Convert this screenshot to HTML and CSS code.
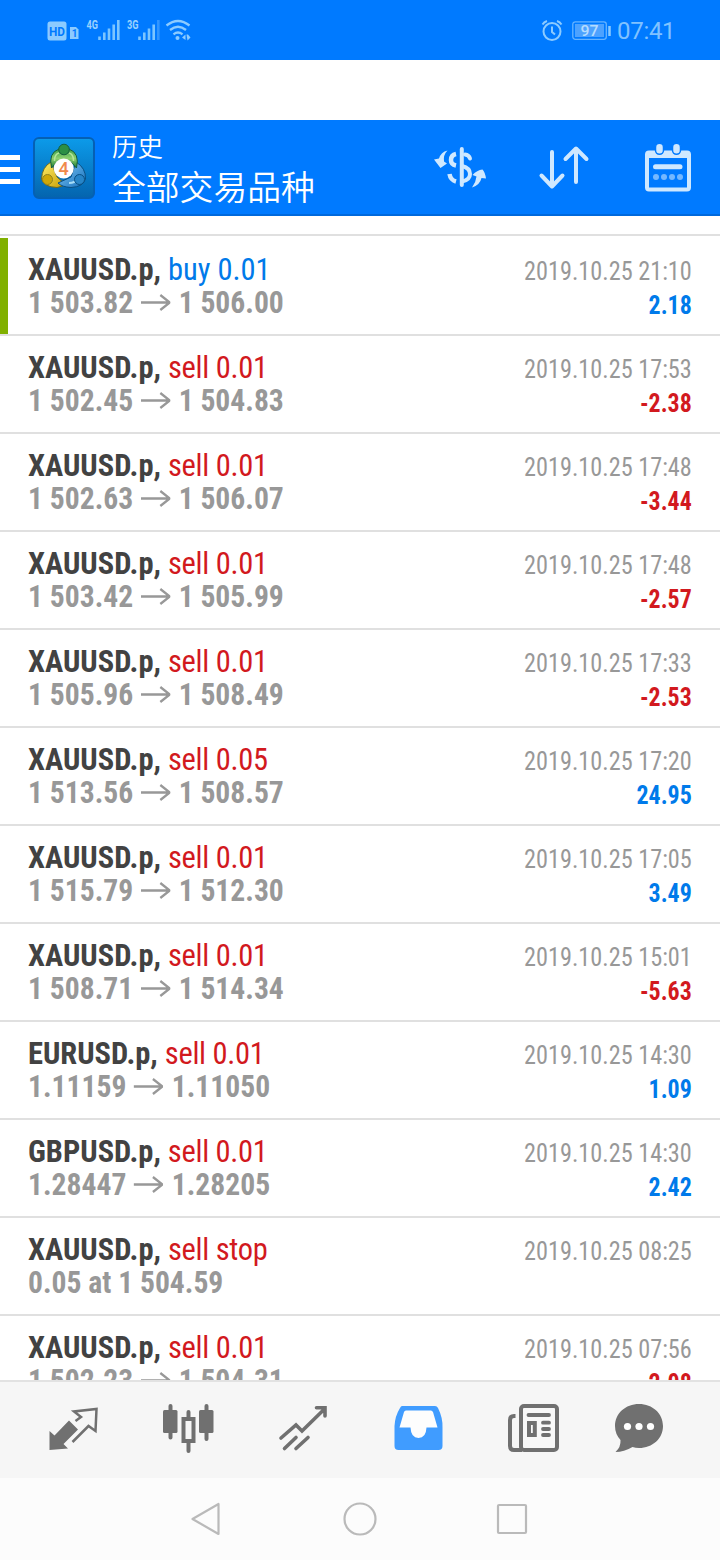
FILE: index.html
```html
<!DOCTYPE html>
<html lang="zh-CN">
<head>
<meta charset="utf-8">
<title>历史</title>
<link rel="stylesheet" href="styles.css">
</head>
<body>
<svg class="defs" width="0" height="0" aria-hidden="true">
  <symbol id="arrow" viewBox="0 0 30 20" preserveAspectRatio="none"><path d="M0 9.200H28M19.500 1.700L29 9.200L19.500 16.700" fill="none" stroke="#989898" stroke-width="2.300"/></symbol>
</svg>
<div class="screen">
  <div class="status">
    <svg class="status-left" width="150" height="30" viewBox="45 15 150 30">
      <rect x="47.500" y="21.500" width="19" height="19" rx="2.500" fill="#8ccbff"/>
      <text x="49" y="35.500" class="hd" textLength="16" lengthAdjust="spacingAndGlyphs">HD</text>
      <path d="M70 27H76L78.500 29.500V39H70Z" fill="#8ccbff"/>
      <text x="71.800" y="37" class="sim">1</text>
      <text x="86.500" y="28.800" class="net" textLength="11.500" lengthAdjust="spacingAndGlyphs">4G</text>
      <path d="M99.500 40V36.500M104.300 40V32.500M109 40V28.500M113.700 40V24.500M118.300 40V20" stroke="#7cc5ff" stroke-width="2.600"/>
      <text x="127" y="28.800" class="net" textLength="11.500" lengthAdjust="spacingAndGlyphs">3G</text>
      <path d="M139.500 40V36.500M144.300 40V32.500M149 40V28.500M153.700 40V24.500" stroke="#7cc5ff" stroke-width="2.600"/>
      <path d="M158.300 40V20" stroke="#3195ff" stroke-width="2.600"/>
      <path d="M166.500 25.500Q178 16.500 189.500 25.500M170 30Q178 23.500 186 30M173.500 34.300Q178 30.800 182.500 34.300" fill="none" stroke="#8ccbff" stroke-width="2.300"/>
      <circle cx="177.500" cy="38" r="2" fill="#8ccbff"/>
      <path d="M182 37.500L185.500 34.500V40ZM186.500 34.500H188L190.500 37.500L187.500 40.500Z" fill="#8ccbff"/>
    </svg>
    <div class="status-right">
      <svg width="22" height="24" viewBox="0 0 22 24"><g fill="none" stroke="#8ccbff" stroke-width="2"><circle cx="11" cy="12.500" r="8.500"/><path d="M11 7.500V13L14 15.500M1.500 5.500Q3 3 6 2M20.500 5.500Q19 3 16 2"/></g></svg>
      <svg width="40" height="20" viewBox="0 0 40 20"><rect x=".8" y=".8" width="33.500" height="17.500" rx="2.500" fill="none" stroke="#66b3ff" stroke-width="1.300"/><rect x="3" y="3" width="29" height="13" fill="#4da2ff"/><path d="M37.500 5V15" stroke="#8ccbff" stroke-width="2.500"/><text x="8.500" y="15" class="pct" textLength="18" lengthAdjust="spacingAndGlyphs">97</text></svg>
      <span class="clock">07:41</span>
    </div>
  </div>

  <div class="header">
    <div class="menu"><i></i><i></i><i></i></div>
    <svg class="logo" width="62" height="62" viewBox="0 0 62 62">
      <defs>
        <linearGradient id="bg" x2="0" y2="1"><stop offset="0" stop-color="#0c9bea"/><stop offset="1" stop-color="#0464ae"/></linearGradient>
        <linearGradient id="gr" x2="0" y2="1"><stop offset="0" stop-color="#3aa04c"/><stop offset=".5" stop-color="#8fd070"/><stop offset="1" stop-color="#187b30"/></linearGradient>
        <linearGradient id="ye" x2="1" y2="1"><stop offset="0" stop-color="#fff06a"/><stop offset="1" stop-color="#c89a00"/></linearGradient>
        <linearGradient id="bl" x2="1" y2="1"><stop offset="0" stop-color="#85cdf7"/><stop offset="1" stop-color="#146ebc"/></linearGradient>
      </defs>
      <rect x="1" y="1" width="60" height="60" rx="5" fill="url(#bg)" stroke="#0560b4" stroke-width="2"/>
      <path d="M18 25Q9 30 8.500 42Q11 50 24 50.500L33 48L24 40Z" fill="url(#ye)" stroke="#6f6a20"/>
      <path d="M43 25Q53 31 52.500 42Q50 50 38 50.500Q29 50 25 46L38 40Z" fill="url(#bl)" stroke="#095084"/>
      <path d="M36 46Q42 46 44 42" fill="none" stroke="#a5dcf7" stroke-width="2"/>
      <path d="M18.500 31Q15 16 26 12H36Q47 16 43.500 31L38 25H24Z" fill="url(#gr)" stroke="#155d3b"/>
      <path d="M21.500 24Q21.500 17 26 16M40.500 24Q40.500 17 36 16" fill="none" stroke="#b5e59a" stroke-width="1.500"/>
      <circle cx="31" cy="12.500" r="5.300" fill="#2c8f45" stroke="#155d3b"/>
      <circle cx="14.500" cy="42.500" r="5" fill="#cfa808" stroke="#91821e"/>
      <circle cx="46.500" cy="42.500" r="5" fill="#2785c8" stroke="#095084"/>
      <circle cx="30.700" cy="31.500" r="10" fill="#fff"/>
      <text x="30.700" y="38" class="four">4</text>
    </svg>
    <div class="titles"><div class="title">历史</div><div class="subtitle">全部交易品种</div></div>
    <svg class="tools" width="270" height="60" viewBox="430 136 270 60">
      <g fill="none" stroke="#cfe8ff" stroke-width="4" stroke-linecap="round">
        <path d="M461.800 149V185"/>
        <path d="M465 154.500Q469 155 470 158.500M462 166Q470 168 470 174Q470 180 462 181.500"/>
      </g>
      <path d="M456 154Q451 155 451 160Q451 164.500 456 165.500M449.500 174Q450.500 180 456 181.500" fill="none" stroke="#cfe8ff" stroke-width="4.500"/>
      <path d="M447.500 150.500Q441 152 439 158.500L434 159.500L440.500 168L447 163.500L444 161.500Q443 155 447.500 150.500ZM472 187.500Q476 182 476.500 176.500L472.500 175Q477 170 482.500 169.500Q485 172 486 178.500L481.500 178Q480 185 472 187.500Z" fill="#cfe8ff"/>
      <g fill="none" stroke="#cfe8ff" stroke-width="4" stroke-linecap="round" stroke-linejoin="round">
        <path d="M552 152V186M541.500 175.500L552 186.500L562.500 175.500M576 182V149M565.500 159L576 148.500L586.500 159"/>
      </g>
      <rect x="647" y="152.500" width="42" height="37" rx="2" fill="none" stroke="#cfe8ff" stroke-width="4"/>
      <path d="M647 151H689V158H647Z" fill="#cfe8ff"/>
      <g fill="#cfe8ff" stroke="#007aff" stroke-width="1.500"><rect x="655.500" y="143.300" width="8" height="11" rx="4"/><rect x="672.500" y="143.300" width="8" height="11" rx="4"/></g>
      <path d="M655.500 166.700H680" stroke="#cfe8ff" stroke-width="5" stroke-linecap="round"/>
      <g fill="#75b8ff"><circle cx="656" cy="177" r="3"/><circle cx="664" cy="177" r="3"/><circle cx="672" cy="177" r="3"/><circle cx="680" cy="177" r="3"/></g>
    </svg>
  </div>

  <div class="list">
    <div class="row marked"><div class="deal"><div class="order"><b>XAUUSD.p,</b> <span class="buy">buy 0.01</span></div><div class="price">1 503.82 <svg class="arr"><use href="#arrow"/></svg> 1 506.00</div></div><div class="meta"><div class="time">2019.10.25 21:10</div><div class="profit buy">2.18</div></div></div>
    <div class="row"><div class="deal"><div class="order"><b>XAUUSD.p,</b> <span class="sell">sell 0.01</span></div><div class="price">1 502.45 <svg class="arr"><use href="#arrow"/></svg> 1 504.83</div></div><div class="meta"><div class="time">2019.10.25 17:53</div><div class="profit sell">-2.38</div></div></div>
    <div class="row"><div class="deal"><div class="order"><b>XAUUSD.p,</b> <span class="sell">sell 0.01</span></div><div class="price">1 502.63 <svg class="arr"><use href="#arrow"/></svg> 1 506.07</div></div><div class="meta"><div class="time">2019.10.25 17:48</div><div class="profit sell">-3.44</div></div></div>
    <div class="row"><div class="deal"><div class="order"><b>XAUUSD.p,</b> <span class="sell">sell 0.01</span></div><div class="price">1 503.42 <svg class="arr"><use href="#arrow"/></svg> 1 505.99</div></div><div class="meta"><div class="time">2019.10.25 17:48</div><div class="profit sell">-2.57</div></div></div>
    <div class="row"><div class="deal"><div class="order"><b>XAUUSD.p,</b> <span class="sell">sell 0.01</span></div><div class="price">1 505.96 <svg class="arr"><use href="#arrow"/></svg> 1 508.49</div></div><div class="meta"><div class="time">2019.10.25 17:33</div><div class="profit sell">-2.53</div></div></div>
    <div class="row"><div class="deal"><div class="order"><b>XAUUSD.p,</b> <span class="sell">sell 0.05</span></div><div class="price">1 513.56 <svg class="arr"><use href="#arrow"/></svg> 1 508.57</div></div><div class="meta"><div class="time">2019.10.25 17:20</div><div class="profit buy">24.95</div></div></div>
    <div class="row"><div class="deal"><div class="order"><b>XAUUSD.p,</b> <span class="sell">sell 0.01</span></div><div class="price">1 515.79 <svg class="arr"><use href="#arrow"/></svg> 1 512.30</div></div><div class="meta"><div class="time">2019.10.25 17:05</div><div class="profit buy">3.49</div></div></div>
    <div class="row"><div class="deal"><div class="order"><b>XAUUSD.p,</b> <span class="sell">sell 0.01</span></div><div class="price">1 508.71 <svg class="arr"><use href="#arrow"/></svg> 1 514.34</div></div><div class="meta"><div class="time">2019.10.25 15:01</div><div class="profit sell">-5.63</div></div></div>
    <div class="row"><div class="deal"><div class="order"><b>EURUSD.p,</b> <span class="sell">sell 0.01</span></div><div class="price short">1.11159 <svg class="arr"><use href="#arrow"/></svg> 1.11050</div></div><div class="meta"><div class="time">2019.10.25 14:30</div><div class="profit buy">1.09</div></div></div>
    <div class="row"><div class="deal"><div class="order"><b>GBPUSD.p,</b> <span class="sell">sell 0.01</span></div><div class="price short">1.28447 <svg class="arr"><use href="#arrow"/></svg> 1.28205</div></div><div class="meta"><div class="time">2019.10.25 14:30</div><div class="profit buy">2.42</div></div></div>
    <div class="row"><div class="deal"><div class="order"><b>XAUUSD.p,</b> <span class="sell">sell stop</span></div><div class="price">0.05 at 1 504.59</div></div><div class="meta"><div class="time">2019.10.25 08:25</div></div></div>
    <div class="row"><div class="deal"><div class="order"><b>XAUUSD.p,</b> <span class="sell">sell 0.01</span></div><div class="price">1 502.23 <svg class="arr"><use href="#arrow"/></svg> 1 504.31</div></div><div class="meta"><div class="time">2019.10.25 07:56</div><div class="profit sell">-2.08</div></div></div>
  </div>

  <div class="tabs">
    <svg width="720" height="96" viewBox="0 1382 720 96">
      <path d="M49.500 1431L54.500 1435.500L69 1420.500L78 1429.500L63.500 1444L68 1448.500L49.500 1450Z" fill="#707070"/>
      <path d="M75.500 1421L81 1417L74 1411.500L96.500 1409L95.500 1431L88.500 1426L72.500 1442" fill="none" stroke="#707070" stroke-width="2.500"/>
      <g fill="#707070"><rect x="163" y="1410" width="14.500" height="23" rx="1.500"/><rect x="199" y="1410" width="14.500" height="23" rx="1.500"/></g>
      <path d="M170.500 1406V1437.500M206.500 1406V1439M188.500 1412V1418M188.500 1442V1451" stroke="#707070" stroke-width="4" stroke-linecap="round"/>
      <rect x="183.500" y="1419" width="10" height="22" fill="none" stroke="#707070" stroke-width="4"/>
      <path d="M281 1438L296 1425L302 1431L324.500 1409M316.500 1407.800H325V1416M284.500 1448.500L296 1437.500M296 1448.500L308 1437.500" fill="none" stroke="#707070" stroke-width="3.600" stroke-linecap="round"/>
      <path d="M402 1406H435Q437 1406 438 1408Q443 1418 442.500 1428V1446Q442.500 1450 438.500 1450H398.500Q394.500 1450 394.500 1446V1426Q395 1416 400 1408Q401 1406 402 1406Z" fill="#409cff"/>
      <path d="M406 1410.500H431Q432 1410.500 433 1412L437.500 1427.500H426.500Q426 1438 418.500 1438Q411 1438 410.500 1427.500H399.500L404 1412Q404.500 1410.500 406 1410.500Z" fill="#fdfdfd"/>
      <rect x="521" y="1406" width="36" height="44" rx="3" fill="#f8f8f8" stroke="#707070" stroke-width="4"/>
      <path d="M515.500 1416H514Q510 1416 510 1420V1446Q510 1450 514 1450H522" fill="none" stroke="#707070" stroke-width="4"/>
      <path d="M528.500 1415H549M543 1422.700H549M543 1429H549M543 1435H549" stroke="#707070" stroke-width="3.800" stroke-linecap="round"/>
      <rect x="529" y="1423" width="5.800" height="12" fill="none" stroke="#707070" stroke-width="4"/>
      <path d="M639 1404C652.500 1404 663 1413.500 663 1426C663 1438.500 652.500 1448 639 1448Q635.500 1448 632.500 1447Q624 1452 615.500 1452Q621 1447 620.500 1440Q615 1434 615 1426C615 1413.500 625.500 1404 639 1404Z" fill="#707070"/>
      <g fill="#fff"><circle cx="627.500" cy="1426.500" r="3.600"/><circle cx="639" cy="1426.500" r="3.600"/><circle cx="650.500" cy="1426.500" r="3.600"/></g>
    </svg>
  </div>
  <div class="nav">
    <svg width="720" height="82" viewBox="0 1478 720 82"><g fill="none" stroke="#bababa" stroke-width="2.200" stroke-linejoin="round"><path d="M192.500 1519L218.500 1504V1534Z"/><circle cx="360" cy="1519" r="15.500"/><rect x="498" y="1505" width="28" height="28" rx="1"/></g></svg>
  </div>
</div>
</body>
</html>
```
FILE: styles.css
```css
body { margin: 0; background: #fff; }
.defs { position: absolute; }
.screen { width: 720px; height: 1560px; display: flex; flex-direction: column; overflow: hidden; font-family: "Roboto Condensed", Roboto, "Noto Sans CJK SC", sans-serif; }
.screen svg { flex: none; }
.status { height: 60px; flex: none; box-sizing: border-box; background: #007aff; margin-bottom: 60px; display: flex; justify-content: space-between; align-items: center; padding: 0 46px 0 45px; }
.status-right { display: flex; align-items: center; gap: 9px; padding-top: 1px; color: #80c2ff; }
.clock { font: 24px/30px Roboto, sans-serif; width: 57px; margin-left: -4px; letter-spacing: -.3px; white-space: nowrap; }
.hd { font: bold 13px Roboto, sans-serif; fill: #007aff; }
.sim { font: bold 10px Roboto, sans-serif; fill: #007aff; }
.net { font: bold 12px Roboto, sans-serif; fill: #9ad2ff; }
.pct { font: 500 15px Roboto, sans-serif; fill: #b5dcff; }
.four { font: 500 18px Roboto, sans-serif; fill: #f08a4c; text-anchor: middle; }
.header { height: 96px; flex: none; box-sizing: border-box; background: #007aff; border-bottom: 2px solid #0069dc; display: flex; align-items: flex-start; color: #fff; }
.menu { width: 20px; padding-top: 35px; display: grid; gap: 7px; }
.menu i { height: 5px; background: #fff; }
.logo { margin: 17px 0 0 13px; }
.titles { width: 318px; margin-left: 17px; font-family: "Noto Sans CJK SC DemiLight", "Noto Sans CJK SC", sans-serif; font-weight: 350; }
.title { font-size: 25.5px; line-height: 30px; padding-top: 10px; }
.subtitle { font-size: 33.8px; line-height: 40px; padding-top: 6px; }
.tools { margin-top: 16px; }
.list { flex: 1; min-height: 0; overflow: hidden; margin-top: 18px; border-top: 2px solid #e0e0e0; padding-top: 2px; font-stretch: 75%; }
.row { height: 98px; box-sizing: border-box; border-bottom: 2px solid #e0e0e0; display: flex; justify-content: space-between; padding: 0 28px; }
.marked { background: linear-gradient(#80b000, #80b000) no-repeat 0 0 / 8px 100%; }
.deal { padding-top: 14px; font-size: 32px; line-height: 34px; color: #424242; white-space: nowrap; }
/* Tighten the condensed face to the narrower list lettering */
.order { transform: translateY(-.4px) scaleX(.952); transform-origin: left; }
.order .sell { letter-spacing: -.3px; }
.price { font-weight: 700; color: #989898; transform: translateY(-.7px) scaleX(.925); transform-origin: left; }
.arr { width: 32.4px; height: 20px; margin-left: 1px; margin-right: 1px; }
.short .arr { margin-left: 0; margin-right: 2px; }
.meta { padding-top: 16px; font-size: 26px; line-height: 34px; color: #989898; text-align: right; white-space: nowrap; }
.time { transform: scaleX(.933); transform-origin: right; }
.profit { font-weight: 700; transform: scaleX(.92); transform-origin: right; }
.buy { color: #007aea; }
.sell { color: #d2191e; }
.tabs { height: 96px; flex: none; border-top: 2px solid #e2e2e2; background: #f6f6f6; }
.nav { height: 82px; flex: none; background: #fcfcfc; }
.tabs svg, .nav svg { display: block; }
```
